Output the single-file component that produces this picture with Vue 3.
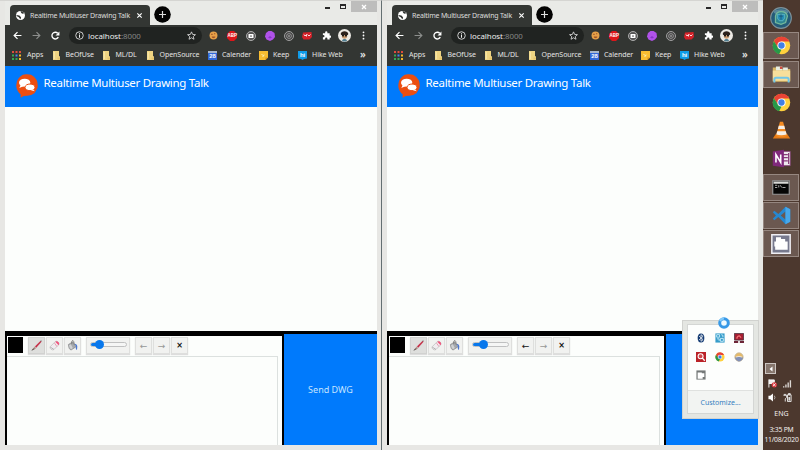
<script setup>
const windows = [
  { id: 'left', level: 27, undo: false },
  { id: 'right', level: 32, undo: true },
]
const bookmarks = [
  { icon: 'apps', label: 'Apps' },
  { icon: 'folder', label: 'BeOfUse' },
  { icon: 'folder', label: 'ML/DL' },
  { icon: 'folder', label: 'OpenSource' },
  { icon: 'calendar', label: 'Calender', badge: '28' },
  { icon: 'keep', label: 'Keep' },
  { icon: 'hike', label: 'Hike Web', badge: 'hi' },
]
const extensions = ['cookie', 'abp', 'camera', 'purple', 'target', 'redbox', 'puzzle', 'avatar', 'more']
const tasks = [
  { icon: 'start', open: false },
  { icon: 'chrome', open: true },
  { icon: 'explorer', open: true },
  { icon: 'chrome', open: false },
  { icon: 'vlc', open: false },
  { icon: 'onenote', open: false },
  { icon: 'terminal', open: true },
  { icon: 'vscode', open: true },
  { icon: 'recorder', open: true },
]
const trayIcons = ['bluetooth', 'network', 'monitor', 'search', 'chrome', 'weather', 'clip']
</script>

<template>
  <div class="desktop">
    <svg class="defs" aria-hidden="true">
      <symbol id="globe" viewBox="0 0 16 16"><circle cx="8" cy="8" r="8" fill="#fff" /><path d="M1 7l5 1 3 3-1 4-3-4-4-2zM8 0l1 3 2 2 4-1-3-3z" fill="#333633" /></symbol>
      <symbol id="back" viewBox="0 0 16 16"><path d="M15 8H2M8 2L2 8l6 6" fill="none" stroke="currentColor" stroke-width="2.200" /></symbol>
      <symbol id="forward" viewBox="0 0 16 16"><path d="M1 8h13M8 2l6 6-6 6" fill="none" stroke="currentColor" stroke-width="2" /></symbol>
      <symbol id="reload" viewBox="0 0 16 16"><path d="M13 11a6 6 0 1 1-1-7" fill="none" stroke="#fff" stroke-width="2.4" /><path d="M15 1v7H8z" fill="#fff" /></symbol>
      <symbol id="info" viewBox="0 0 16 16"><circle cx="8" cy="8" r="6.7" fill="none" stroke="#ddd" stroke-width="1.6" /><path d="M8 7v5M8 4v2" stroke="#eee" stroke-width="1.8" /></symbol>
      <symbol id="star" viewBox="0 0 16 16"><path d="M8 1.5l2 4.6 5 .4-3.800 3.300 1.200 4.900L8 12l-4.400 2.700 1.200-4.900L1 6.500l5-.4z" fill="none" stroke="#ddd" stroke-width="1.5" /></symbol>

      <symbol id="apps" viewBox="0 0 18 18"><g fill="#e04b3c"><path d="M0 0h4v4H0zM7 0h4v4H7zM14 0h4v4h-4z" /></g><path d="M0 7h4v4H0zM0 14h4v4H0z" fill="#35a853" /><path d="M7 7h4v4H7z" fill="#4285f4" /><path d="M14 7h4v4h-4zM14 14h4v4h-4z" fill="#f2b62b" /><path d="M7 14h4v4H7z" fill="#35a853" /></symbol>
      <symbol id="folder" viewBox="0 0 14 18"><path d="M0 0h12v10l2 1v7H0z" fill="#efd482" /><path d="M1 2h3v14H1z" fill="#f7e3a2" /><path d="M9 13h5v4H9z" fill="#e5c36b" /></symbol>
      <symbol id="calendar" viewBox="0 0 18 18"><path d="M0 0h18v18H0z" fill="#3268d8" /><path d="M0 0h18v4H0z" fill="#a8b7cd" /></symbol>
      <symbol id="keep" viewBox="0 0 18 18"><path d="M0 0h18v13l-5 5H0z" fill="#f9bd31" /><path d="M13 18v-5h5z" fill="#d38d18" /><path d="M5 6l3 3 3-1M8 9v3" stroke="#fff0b0" stroke-width="2" fill="none" /></symbol>
      <symbol id="hike" viewBox="0 0 18 18"><path d="M0 0h18v15l-6 1-3 2-3-2-6-1z" fill="#109be9" /></symbol>

      <symbol id="cookie" viewBox="0 0 20 20"><circle cx="10" cy="10" r="8.800" fill="#e7a148" /><path d="M5 6h3v3H5zM11 5h3v2h-3zM6 12h8v2l-3 2-4-1z" fill="#9e5428" /></symbol>
      <symbol id="abp" viewBox="0 0 20 20"><path d="M6 0h8l6 6v8l-6 6H6l-6-6V6z" fill="#dc161a" /></symbol>
      <symbol id="camera" viewBox="0 0 20 20"><circle cx="10" cy="10" r="9" fill="#555" stroke="#b8b8b8" stroke-width="1.8" /><rect x="5" y="6" width="10" height="8" rx="1" fill="#fff" /><circle cx="10" cy="10" r="1.7" fill="#555" /></symbol>
      <symbol id="purple" viewBox="0 0 20 20"><path d="M7 0h6l6 4 1 8-4 5-6 3-7-3-3-6 2-7z" fill="#b052e9" /><path d="M6 13l4-3 4 3-4 2z" fill="#8734c8" /></symbol>
      <symbol id="target" viewBox="0 0 20 20"><circle cx="10" cy="10" r="9" fill="#444" stroke="#aaa" stroke-width="1.8" /><circle cx="10" cy="10" r="4.800" fill="none" stroke="#aaa" stroke-width="1.500" /><circle cx="10" cy="10" r="1.5" fill="#ddd" /></symbol>
      <symbol id="redbox" viewBox="0 0 20 20"><path d="M2 3l17-1 1 10-5 5H3l-3-5z" fill="#d42128" /><path d="M4 7l2 3 3-3v4M11 7l3 3 3-3" stroke="#fff" stroke-width="1.700" fill="none" /></symbol>
      <symbol id="puzzle" viewBox="0 0 20 20"><path d="M2 5h5V3a2.500 2.500 0 0 1 5 0v2h5v5h1a2.500 2.500 0 0 1 0 5h-1v4h-5v-2a2.500 2.500 0 0 0-5 0v2H2v-5h1a2.500 2.500 0 0 0 0-5H2z" fill="#fff" /></symbol>
      <symbol id="avatar" viewBox="0 0 24 24"><circle cx="12" cy="12" r="12" fill="#eceae4" /><path d="M7 21q5-6 10 0l-3 2h-4z" fill="#527f91" /><circle cx="12" cy="13" r="5" fill="#c89a70" /><path d="M5 9q1-5 7-5 6 0 7 5l-1 2H6z" fill="#2b211b" /><path d="M7 11h4v3H8zm6 0h4l-1 3h-3z" fill="#151515" /></symbol>
      <symbol id="more" viewBox="0 0 20 20"><g fill="#fff"><circle cx="10" cy="3" r="2" /><circle cx="10" cy="10" r="2" /><circle cx="10" cy="17" r="2" /></g></symbol>

      <symbol id="chat" viewBox="0 0 66 70"><path d="M14 6q6-7 19-6 14 0 21 7l8 10q5 11 2 25l-8 14q-9 8-22 8l-11 1-9 5V60Q0 49 1 32q1-17 13-26z" fill="#eb4e11" /><ellipse cx="26" cy="25" rx="17" ry="12" fill="#fff" /><path d="M14 32l-4 9 12-5z" fill="#fff" /><ellipse cx="42" cy="39" rx="15" ry="10" fill="#fff" stroke="#eb4e11" stroke-width="3" /><path d="M50 45l7 6-12-3z" fill="#fff" /></symbol>

      <symbol id="brush" viewBox="0 0 32 32"><path d="M12 19L28 3l2 2-15 17z" fill="#c4233d" stroke="#c4233d" /><path d="M27 2l4-1-2 5z" fill="#666" /><path d="M10 20l5 3q-5 6-13 7 3-6 8-10z" fill="#a98a81" /><path d="M2 30q5-2 7-5" stroke="#555" stroke-width="2" /></symbol>
      <symbol id="eraser" viewBox="0 0 32 32"><path d="M3 20L19 4q4-2 8 2t1 8L14 28q-4 2-8-1t-3-7z" fill="#f0edf0" stroke="#aaa" stroke-width="1.500" /><path d="M18 5l10 10q3-4 0-8-5-6-10-2z" fill="#f1527b" /><path d="M16 9l7 10" stroke="#e27b93" stroke-width="2" /><path d="M4 21l10 6" stroke="#999" stroke-width="2" /></symbol>
      <symbol id="bucket" viewBox="0 0 32 32"><path d="M4 13L17 5l9 15-14 9q-7-1-8-16z" fill="#a6a9ac" stroke="#777" stroke-width="1.500" /><path d="M6 15l5-3 6 11-5 4q-5-2-6-12z" fill="#cfd1d3" /><path d="M14 12q-2-11 3-11 4 2 4 13" stroke="#666" fill="none" stroke-width="2" /><path d="M22 11q7 0 8 8l-1 10q-5-3-3-10z" fill="#4c77cf" /></symbol>

      <symbol id="start" viewBox="0 0 24 24"><circle cx="12" cy="12" r="11.300" fill="#245b78" stroke="#7d929b" stroke-width="1.200" /><ellipse cx="12" cy="5.500" rx="8" ry="3" fill="#58869a" /><path d="M6 10q1-5 6-5 6 0 7 5l-2 7-5 2-6-2z" fill="#2d8490" stroke="#76b99b" stroke-width="1.400" /><path d="M8 8h8v4l-2 3h-4l-2-3z" fill="#258db6" stroke="#77c7c9" stroke-width=".7" /><path d="M10 10h4M12 8v6" stroke="#1b5879" /></symbol>
      <symbol id="chrome" viewBox="0 0 24 24"><circle cx="12" cy="12" r="11" fill="#ffd13d" /><path d="M2.500 6.500A11 11 0 0 1 22 7H12l-5 7z" fill="#ea4335" /><path d="M2.500 6.500L8 15l4 2-3 6A11 11 0 0 1 2.500 6.500z" fill="#289849" /><circle cx="12" cy="12" r="5.200" fill="#fff" /><circle cx="12" cy="12" r="4" fill="#427fe5" /></symbol>
      <symbol id="explorer" viewBox="0 0 24 24"><path d="M1 3h7l2 2h13v16H1z" fill="#d9b866" /><path d="M5 2h8v5H5zM14 3h6v4h-6z" fill="#e8eee2" /><path d="M10 2h3v3h-3z" fill="#cf4b3b" /><path d="M1 7h22v13H1z" fill="#f7df9b" /><path d="M3 22v-4q0-2 2-2h14q2 0 2 2v4" fill="none" stroke="#71c6e8" stroke-width="2.500" /></symbol>
      <symbol id="vlc" viewBox="0 0 24 24"><path d="M5 16h14l4 6H1z" fill="#e67b16" /><path d="M10 1h4l5 18q-7 3-14 0z" fill="#f48a21" /><path d="M8.500 6h7l1 4h-9zM6.500 13h11l1 4q-7 2-13 0z" fill="#f5eee5" /></symbol>
      <symbol id="onenote" viewBox="0 0 24 24"><path d="M12 3h11v18H12z" fill="#eee9ee" stroke="#873b78" /><path d="M14 7h6M14 11h6M14 15h6M21 5v14" stroke="#873b78" stroke-width="1.500" /><path d="M1 3l14-2v22L1 21z" fill="#80297b" /><path d="M5 17V7l6 10V7" stroke="#fff" stroke-width="2" fill="none" /></symbol>
      <symbol id="terminal" viewBox="0 0 24 20"><path d="M1 1h22v18H1z" fill="#050505" stroke="#999" stroke-width="1.500" /><path d="M2 2h20v3H2z" fill="#d9d9d6" /><path d="M4 7h3M4 10h3M9 7v3M11 7l2 3M14 10h4" stroke="#ddd" stroke-width="1" /></symbol>
      <symbol id="vscode" viewBox="0 0 24 24"><path d="M17 1l6 3v16l-6 3L8 14l-5 4-2-2 4-4-4-4 2-2 5 4zm0 6l-6 5 6 5z" fill="#2588d1" /><path d="M17 1l6 3v16l-6 3z" fill="#48a8ea" /></symbol>
      <symbol id="recorder" viewBox="0 0 24 24"><path d="M1 1h22v22H1z" fill="#77798d" stroke="#f0eff4" stroke-width="1.800" /><path d="M4 9h2V4h6v2h5v3h3v10H5v-4H4z" fill="#fff" /></symbol>

      <symbol id="bluetooth" viewBox="0 0 24 24"><ellipse cx="12" cy="12" rx="8" ry="11" fill="#153b73" /><path d="M7 7l10 9-5 4V4l5 4-10 9" fill="none" stroke="#fff" stroke-width="1.800" /></symbol>
      <symbol id="network" viewBox="0 0 24 24"><path d="M1 1h22v22H1z" fill="#369cca" /><path d="M4 4h7v6H4zM13 13h7v7h-7zM5 14h5v5M15 4q6 0 4 6" fill="none" stroke="#d6f3fc" stroke-width="2" /></symbol>
      <symbol id="monitor" viewBox="0 0 24 24"><path d="M1 1h22v16H1z" fill="#a51e31" stroke="#4d3341" stroke-width="2" /><path d="M7 14q0-7 6-7l4 4" stroke="#f06f74" stroke-width="3" fill="none" /><path d="M0 19h10v5H0zm14 0h10v5H14z" fill="#6d2638" /></symbol>
      <symbol id="search" viewBox="0 0 24 24"><path d="M0 0h24v24H0z" fill="#ba2228" /><circle cx="11" cy="10" r="6" fill="#cf464a" stroke="#fff" stroke-width="2.500" /><path d="M15 14l6 7" stroke="#fff" stroke-width="3" /></symbol>
      <symbol id="weather" viewBox="0 0 24 24"><circle cx="12" cy="12" r="10" fill="#e6ba68" stroke="#c5b9a0" stroke-width="2" /><path d="M2 14q9-5 20 0-3 9-11 9-7-2-9-9z" fill="#8391b6" /><path d="M5 12q7-3 14 0" stroke="#eee" stroke-width="2" fill="none" /></symbol>
      <symbol id="clip" viewBox="0 0 24 24"><path d="M1 1h22v22H1z" fill="#747878" /><path d="M4 6h10v2h6v9h-4v4H4z" fill="#fff" /></symbol>
      <symbol id="flag" viewBox="0 0 20 20"><path d="M2 1v18M2 2h12v8H2" fill="#eee" stroke="#fff" stroke-width="2" /><circle cx="14" cy="13" r="6" fill="#d7373e" /><path d="M11 10l6 6M17 10l-6 6" stroke="#fff" stroke-width="2" /></symbol>
      <symbol id="signal" viewBox="0 0 20 20"><path d="M0 19v-3h3v3zM5 19v-7h3v7zM10 19V8h3v11zM15 19V3h3v16z" fill="#ddd8d5" /></symbol>
      <symbol id="speaker" viewBox="0 0 20 20"><path d="M1 6h4l6-5v18l-6-5H1z" fill="#fff" /><path d="M14 6q3 4 0 8" stroke="#ddd" fill="none" stroke-width="1.500" /></symbol>
      <symbol id="power" viewBox="0 0 20 20"><path d="M10 4h8v15h-8zM12 1h4v3h-4zM1 5h7v5l-3 3v6M3 2v3M6 2v3" fill="none" stroke="#eee" stroke-width="2" /><path d="M12 9h4v8h-4z" fill="#ddd" /></symbol>
    </svg>

    <section v-for="win in windows" :key="win.id" class="window" :class="win.id">
      <header class="titlebar">
        <div class="tab">
          <svg class="tab-icon"><use href="#globe" /></svg>
          <span class="tab-title">Realtime Multiuser Drawing Talk</span>
          <svg class="tab-close" viewBox="0 0 8 8"><path d="M1.500 1.500l5 5M6.500 1.500l-5 5" stroke="#fff" stroke-width="1.300" /></svg>
        </div>
        <svg class="new-tab" viewBox="0 0 17 17"><circle cx="8.500" cy="8.500" r="8.300" fill="#030303" /><path d="M5 8.500h7M8.500 5v7" stroke="#ddd" stroke-width="1.200" /></svg>
        <div class="controls">
          <i class="minimize"></i><i class="maximize"></i>
          <span class="close"><svg viewBox="0 0 8 8"><path d="M2 2l4 4M6 2L2 6" stroke="#fff" stroke-width="1.300" /></svg></span>
        </div>
      </header>

      <div class="viewport">
        <div class="browser-tools">
          <div class="navigation">
            <svg class="nav-icon"><use href="#back" /></svg>
            <svg class="nav-icon dim"><use href="#forward" /></svg>
            <svg class="nav-icon"><use href="#reload" /></svg>
            <div class="address">
              <svg class="info-icon"><use href="#info" /></svg>
              <span>localhost<b>:8000</b></span>
              <svg class="star-icon"><use href="#star" /></svg>
            </div>
            <div class="extensions">
              <div v-for="icon in extensions" :key="icon" class="icon-box" :class="icon">
                <svg><use :href="'#' + icon" /></svg>
                <span v-if="icon === 'abp'" class="badge">ABP</span>
              </div>
            </div>
          </div>
          <div class="bookmarks">
            <div v-for="mark in bookmarks" :key="mark.label" class="bookmark" :class="mark.icon">
              <div class="icon-box">
                <svg><use :href="'#' + mark.icon" /></svg>
                <span v-if="mark.badge" class="badge">{{ mark.badge }}</span>
              </div>
              <span>{{ mark.label }}</span>
            </div>
            <span class="overflow">»</span>
          </div>
        </div>
        <header class="page-header">
          <svg><use href="#chat" /></svg>
          <h1>Realtime Multiuser Drawing Talk</h1>
        </header>
        <main class="messages"></main>
        <footer class="composer">
          <div class="editor">
            <div class="tools">
              <div class="swatch"></div>
              <div class="group">
                <button class="tool active"><svg><use href="#brush" /></svg></button>
                <button class="tool"><svg><use href="#eraser" /></svg></button>
                <button class="tool"><svg><use href="#bucket" /></svg></button>
              </div>
              <div class="slider"><div class="track"><div class="fill" :style="{ width: win.level + '%' }"><i></i></div></div></div>
              <div class="group">
                <button class="tool" :class="{ disabled: !win.undo }">←</button>
                <button class="tool disabled">→</button>
                <button class="tool clear">×</button>
              </div>
            </div>
            <div class="canvas"></div>
          </div>
          <button class="send">{{ win.id === 'left' ? 'Send DWG' : '' }}</button>
        </footer>
      </div>
    </section>

    <aside class="taskbar">
      <div v-for="(task, index) in tasks" :key="index" class="task" :class="{ open: task.open }">
        <svg :class="task.icon"><use :href="'#' + task.icon" /></svg>
      </div>
      <div class="system">
        <div class="tray-toggle"><svg viewBox="0 0 8 8"><path d="M5.500 1.500v5L2.500 4z" fill="#fff" /></svg></div>
        <div class="status">
          <svg v-for="icon in ['flag', 'signal', 'speaker', 'power']" :key="icon"><use :href="'#' + icon" /></svg>
        </div>
        <span class="language">ENG</span>
        <span class="clock">3:35 PM<br>11/08/2020</span>
      </div>
    </aside>

    <aside class="tray">
      <div class="tray-content">
        <div class="tray-icons"><svg v-for="icon in trayIcons" :key="icon"><use :href="'#' + icon" /></svg></div>
        <div class="customize">Customize...</div>
      </div>
      <svg class="busy" viewBox="0 0 14 14"><circle cx="7" cy="7" r="4.300" fill="#eefaff" stroke="#3799e7" stroke-width="3" /><path d="M3 5a4.500 4.500 0 0 1 4-2.500" fill="none" stroke="#83cbfa" stroke-width="2" /></svg>
    </aside>
  </div>
</template>

<style>
body { overflow: hidden; }
</style>

<style scoped>
* { box-sizing: border-box; }
svg { display: block; flex: none; overflow: visible; }
button { border: 0; padding: 0; font: inherit; }
.desktop { position: relative; display: flex; width: 800px; height: 450px; overflow: hidden; font-family: "Noto Sans", "Open Sans", sans-serif; background: #e5e5e3; }
.defs { position: absolute; width: 0; height: 0; }
.window { width: 382px; height: 450px; padding: 0 5px 5px; background: #e7e7e4; border-top: 1px solid #d5d5d2; }
.window.left { border-right: 1px solid #646f72; padding-right: 4px; }
.window.right { width: 381px; }
.titlebar { display: flex; height: 24px; background: #e9eae7; }
.tab { display: flex; align-items: center; width: 140px; height: 20px; margin: 4px 0 0 5px; padding: 0 6px; border-radius: 4px 4px 0 0; background: #333633; color: #ddd; }
.tab-icon { width: 9px; height: 9px; }
.tab-title { width: 103px; margin-left: 5px; white-space: nowrap; font: 7px "Noto Sans", sans-serif; letter-spacing: -.2px; }
.tab-close { width: 7px; height: 7px; margin-left: 3px; }
.new-tab { width: 17px; height: 17px; margin: 5px 0 0 4px; }
.controls { display: flex; align-items: flex-start; margin: 0 0 0 auto; height: 12px; }
.minimize { width: 5px; height: 2px; margin: 6px 10px 0 0; background: #292929; }
.maximize { width: 6px; height: 5px; margin: 3px 5px 0 0; border: 1px solid #292929; border-top-width: 2px; }
.close { display: grid; place-items: center; width: 26px; height: 11px; background: #bdbdbc; }
.close svg { width: 8px; height: 8px; }
.viewport { display: flex; flex-direction: column; width: 372px; height: 420px; background: #fcfefc; }
.window.right .viewport { width: 371px; }
.browser-tools { flex: none; height: 41px; background: #333633; }
.navigation { display: flex; align-items: center; height: 21px; padding: 0 3px 0 8px; }
.nav-icon { width: 9px; height: 9px; margin-right: 10px; color: #fff; }
.nav-icon.dim { color: #8c8e8c; }
.address { display: flex; flex: none; align-items: center; width: 133px; height: 17px; margin-left: -1px; padding: 0 6px; border-radius: 9px; background: #202321; color: #eee; font-size: 7.900px; letter-spacing: -.05px; }
.address b { font-weight: 400; color: #858785; }
.info-icon { width: 9px; height: 9px; margin-right: 4px; }
.star-icon { width: 9px; height: 9px; margin-left: auto; }
.icon-box { position: relative; }
.badge { position: absolute; inset: 0; display: flex; align-items: center; justify-content: center; color: #fff; font: 700 4.500px/10px "Liberation Sans", sans-serif; }
.bookmark .badge { font-size: 6px; line-height: 9px; }
.bookmark.calendar .badge { top: 2px; }
.extensions { display: grid; flex: none; grid-template-columns: repeat(9, 18.800px); place-items: center; margin-left: 2px; width: 170px; }
.extensions svg { width: 9px; height: 9px; }
.extensions .abp svg, .extensions .camera svg, .extensions .purple svg, .extensions .target svg, .extensions .redbox svg { width: 10px; height: 10px; }
.extensions .avatar svg { width: 13px; height: 13px; }
.bookmarks { display: grid; grid-template-columns: 41px 50px 44px 61px 51px 39px 62px 12px; height: 18px; padding-left: 7px; align-items: center; color: #e5e5e3; font-size: 7px; line-height: 10px; letter-spacing: -.05px; }
.bookmark { display: flex; align-items: center; gap: 5px; white-space: nowrap; }
.bookmark svg { width: 9px; height: 9px; }
.bookmark.folder svg { width: 7px; height: 9px; }
.bookmark.folder { gap: 5.500px; }
.bookmark.apps { gap: 6px; }
.overflow { font-size: 10px; font-weight: 600; line-height: 9px; margin-top: -2px; }
.page-header { display: flex; flex: none; height: 41px; padding: 8px 0 0 11px; background: #007afc; color: #fff; }
.page-header svg { width: 22px; height: 24px; }
.page-header h1 { margin: 0 0 0 5.500px; font: 11.500px/18px "Noto Sans", sans-serif; letter-spacing: -.3px; white-space: nowrap; }
.messages { flex: none; height: 224px; background: #fcfefc; }
.composer { display: grid; flex: none; grid-template-columns: 279px 1fr; height: 114px; background: #000; }
.editor { margin: 5px 2px 0; padding-top: 1px; background: #fcfefc; overflow: hidden; }
.tools { display: flex; height: 19px; }
.swatch { width: 15px; height: 16px; margin: 0 5px 0 1px; background: #000; }
.group { display: flex; gap: 1px; }
.tool { display: grid; place-items: center; width: 17px; height: 17px; border: 1px solid #dedfdd; background: #f1f2f0; color: #111; box-shadow: 0 1px 1px #ddd; font: 9px "DejaVu Sans", sans-serif; }
.tool.active { background: #dedfdd; border-color: #d1d2d0; }
.tool svg { width: 11px; height: 11px; }
.tool.disabled { color: #969896; }
.tool.clear { font-weight: 700; font-size: 8px; }
.slider { width: 44px; height: 17px; margin: 0 5px; padding: 4px 3px; border: 1px solid #dedfdd; background: #f1f2f0; box-shadow: 0 1px 1px #ddd; }
.track { width: 37px; height: 5px; border: 1px solid #bfc0c0; border-radius: 3px; background: #f5f6f5; }
.fill { position: relative; height: 3px; border-radius: 3px; background: #0878ec; }
.fill i { position: absolute; right: -4px; top: -3px; width: 9px; height: 9px; border-radius: 50%; background: #0878ec; }
.canvas { width: 271px; height: 90px; border: 1px solid #dce1df; border-bottom: 0; border-left: 0; }
.send { height: 111px; margin-top: 3px; background: #007afc; color: #c6e4ff; font: 9px "Noto Sans", sans-serif; }
.taskbar { display: flex; flex-direction: column; width: 37px; padding-top: 4px; background: #4c382e; }
.task { display: grid; place-items: center; width: 36px; height: 27px; margin-bottom: 1.250px; }
.task.open { border: 1px solid #968780; background: #6b5850; }
.task svg { width: 19px; height: 19px; }
.task .start { width: 22px; height: 22px; }
.task .terminal { width: 18px; height: 15px; }
.task .recorder { width: 20px; height: 20px; }
.system { display: flex; flex-direction: column; align-items: center; margin-top: auto; height: 87px; color: #f2efed; font-size: 7px; }
.tray-toggle { display: grid; place-items: center; align-self: flex-start; width: 11px; height: 11px; margin-left: 2px; border: 1px solid #ccc5c1; background: #86766d; }
.tray-toggle svg { width: 8px; height: 8px; }
.status { display: grid; grid-template-columns: 15px 15px; grid-template-rows: 14px 14px; place-items: center; align-self: flex-start; margin: 2px 0 0 2px; }
.status svg { width: 9px; height: 9px; }
.language { margin-top: 5px; line-height: 10px; }
.clock { margin-top: 6px; text-align: center; line-height: 10px; font-size: 6.800px; letter-spacing: -.2px; white-space: nowrap; }
.tray { position: absolute; left: 682px; top: 320px; width: 77px; height: 99px; padding: 3px 4px; border: 1px solid #d1d2cf; background: #e4e6e2; }
.tray-content { height: 90px; background: #fdfefd; border: 1px solid #d4d6d4; }
.tray-icons { display: grid; grid-template-columns: repeat(3, 18.700px); grid-auto-rows: 18.500px; height: 65px; padding: 4px 0 0 4px; place-items: center; align-content: start; }
.tray-icons svg { width: 10px; height: 10px; }
.customize { height: 23px; border-top: 1px solid #dfe1df; background: #f2f4f2; color: #347fc0; font-size: 7px; line-height: 24px; text-align: center; }
.busy { position: absolute; left: 34px; top: -5px; width: 14px; height: 14px; }
</style>
